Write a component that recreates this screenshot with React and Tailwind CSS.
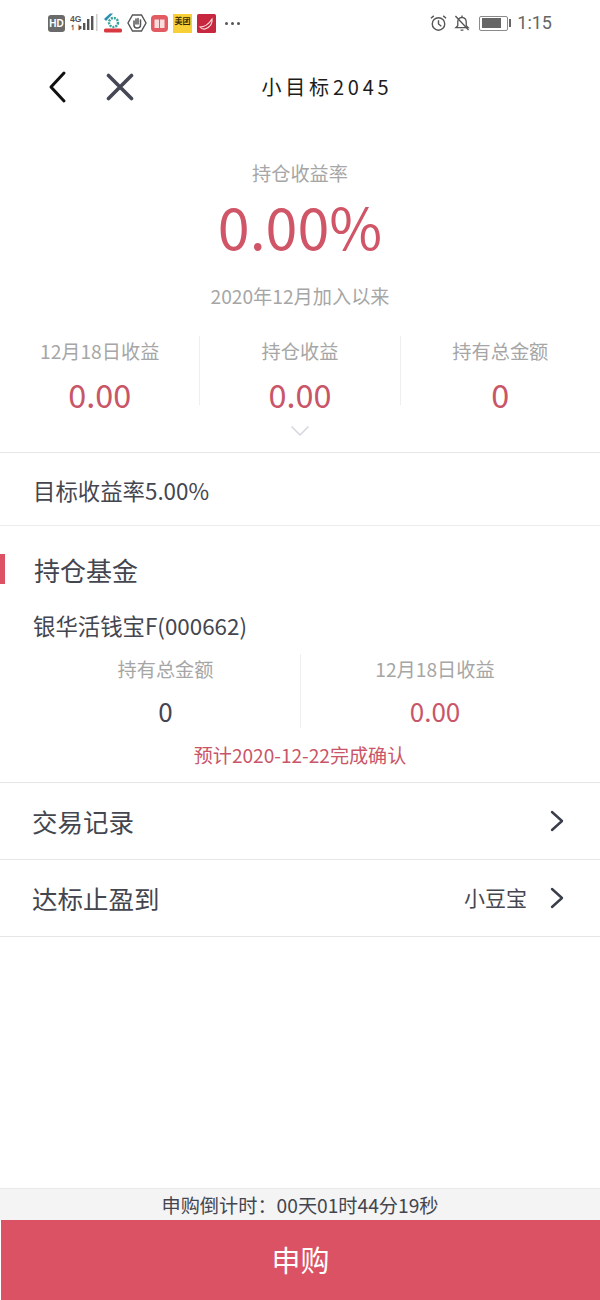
import React from 'react';

const Chevron = () => (
    <svg width="16" height="24" viewBox="0 0 16 24" fill="none" stroke="#3a3d4a" strokeWidth="2.4" strokeLinecap="round" strokeLinejoin="round">
        <path d="M3 3 L13 12 L3 21" />
    </svg>
);

function StatusBar() {
    return (
        <div className="h-[46px] flex items-center justify-between pl-[48px] pr-[48px] shrink-0">
            <div className="flex items-center">
                <div className="w-[17px] h-[17px] rounded-[3px] bg-[#6a6a6a] text-white text-[10px] font-bold flex items-center justify-center [font-family:'Liberation_Sans',sans-serif]">HD</div>
                <div className="ml-[5px] w-[29px] h-[18px]">
                    <svg width="29" height="18" viewBox="0 0 29 18" fill="#555">
                        <rect x="9" y="12" width="2.4" height="3" />
                        <rect x="13" y="9" width="2.4" height="7" />
                        <rect x="17" y="5" width="2.4" height="11" />
                        <rect x="21" y="2" width="2.4" height="14" />
                        <rect x="26" y="0" width="1.5" height="17" fill="#ccc" />
                        <text x="0" y="7.5" fontSize="8.5" fontWeight="700" fontFamily="Liberation Sans">4G</text>
                        <text x="0" y="15.5" fontSize="7" fontWeight="700" fontFamily="Liberation Sans">↿⇂</text>
                    </svg>
                </div>
                <svg className="ml-[4px]" width="20" height="20" viewBox="0 0 20 20" fill="none">
                    <path d="M1 6 L7 0.5 L10 0.5 L3 8 Z" fill="#2b8fb0" />
                    <circle cx="10.5" cy="9.5" r="4.5" fill="none" stroke="#3aa39a" strokeWidth="2.4" strokeDasharray="2 1" />
                    <rect x="1" y="15.5" width="18" height="4" rx="1.5" fill="#d8383f" />
                </svg>
                <svg className="ml-[4px]" width="20" height="20" viewBox="0 0 20 20" fill="none">
                    <path d="M5.5 2 H14.5 L19 10 L14.5 18 H5.5 L1 10 Z" stroke="#555" strokeWidth="1.4" />
                    <path d="M7 8 V12 Q7 15 10 15 Q13.5 15 13.5 12 V7 M9 11 V6 M11 11 V5.5 M13.5 10 V7" stroke="#555" strokeWidth="1.5" strokeLinecap="round" />
                </svg>
                <svg className="ml-[4px]" width="17" height="17" viewBox="0 0 17 17">
                    <rect width="17" height="17" rx="4" fill="#e25a62" />
                    <path d="M3.5 4.5 H8 V13 H3.5 Z M9 4.5 H13.5 V13 H9 Z" fill="#fbdcdc" />
                </svg>
                <div className="ml-[5px] w-[19px] h-[19px] bg-[#f9cf38] text-[#3a2a00] text-[8px] leading-[14px] text-center font-bold [font-family:'Noto_Sans_CJK_SC',sans-serif]">美团</div>
                <svg className="ml-[5px]" width="19" height="19" viewBox="0 0 19 19">
                    <rect width="19" height="19" rx="1.5" fill="#c8283f" />
                    <path d="M3 13 Q10 13 15 5 Q16 12 8 15 Q5 15.5 3 13 Z" fill="none" stroke="#fbe4e4" strokeWidth="1.1" />
                </svg>
                <span className="ml-[9px] flex gap-[3px]">
                    <i className="w-[3px] h-[3px] rounded-full bg-[#555]" />
                    <i className="w-[3px] h-[3px] rounded-full bg-[#555]" />
                    <i className="w-[3px] h-[3px] rounded-full bg-[#555]" />
                </span>
            </div>
            <div className="flex items-center">
                <svg width="17" height="18" viewBox="0 0 18 18" fill="none" stroke="#555" strokeWidth="1.5">
                    <circle cx="9" cy="10" r="6.6" />
                    <path d="M9 6 V10 L12 12.5" />
                    <path d="M1 4 L4 1.5 M17 4 L14 1.5" />
                </svg>
                <svg className="ml-[7px]" width="16" height="18" viewBox="0 0 17 18" fill="none" stroke="#555" strokeWidth="1.4">
                    <path d="M4 12 V8 Q4 3.5 8.5 3 Q13 3.5 13 8 V12 L15 14 H2 Z" />
                    <path d="M8.5 1 V3 M7 16.5 H10" />
                    <path d="M1.5 1.5 L15.5 16.5" />
                </svg>
                <div className="ml-[9px] w-[29px] h-[15px] rounded-[2px] border border-[#8a8a8a] p-[1.5px]">
                    <div className="w-[19px] h-full bg-[#666]" />
                </div>
                <div className="ml-[1px] w-[2px] h-[8px] bg-[#666]" />
                <span className="ml-[6px] text-[18px] text-[#666] leading-none [font-family:'Roboto',sans-serif]">1:15</span>
            </div>
        </div>
    );
}

function Stat({ label, value, border }) {
    return (
        <div className={`flex-1 h-[69px] flex flex-col items-center ${border ? 'border-r border-[#eeeeee]' : ''}`}>
            <div className="text-[19.2px] leading-[30px] text-[#a6a6a6]">{label}</div>
            <div className="mt-[9px] text-[32.4px] leading-[38px] text-[#c95668]">{value}</div>
        </div>
    );
}

export default function App() {
    return (
        <div className="w-[600px] h-[1300px] bg-white flex flex-col overflow-hidden opacity-[.999] [font-family:'Noto_Sans_CJK_SC','Noto_Sans',sans-serif]">
            <StatusBar />

            <div className="h-[82px] shrink-0 relative flex items-center justify-center pl-[54px]">
                <svg className="absolute left-[48px] top-[24px]" width="20" height="34" viewBox="0 0 20 34" fill="none" stroke="#111" strokeWidth="3" strokeLinecap="round" strokeLinejoin="round">
                    <path d="M16 3 L3 17 L16 31" />
                </svg>
                <svg className="absolute left-[106px] top-[27px]" width="28" height="28" viewBox="0 0 28 28" fill="none" stroke="#454754" strokeWidth="3.6" strokeLinecap="round">
                    <path d="M2.5 2.5 L25.5 25.5 M25.5 2.5 L2.5 25.5" />
                </svg>
                <span className="text-[20px] tracking-[3.8px] text-[#1c1c1c]">小目标2045</span>
            </div>

            <div className="flex flex-col items-center shrink-0">
                <div className="mt-[30px] h-[30px] text-[19.2px] leading-[30px] text-[#a6a6a6]">持仓收益率</div>
                <div className="mt-[7px] h-[60px] text-[57.4px] leading-[60px] text-[#cf5567]">0.00%</div>
                <div className="mt-[26px] h-[30px] text-[19.2px] leading-[30px] text-[#a6a6a6]">2020年12月加入以来</div>
            </div>

            <div className="mt-[25px] flex shrink-0">
                <Stat label="12月18日收益" value="0.00" border />
                <Stat label="持仓收益" value="0.00" border />
                <Stat label="持有总金额" value="0" />
            </div>

            <div className="h-[48px] border-b border-[#e6e6e6] flex justify-center pt-[20px] shrink-0">
                <svg width="20" height="12" viewBox="0 0 20 12" fill="none" stroke="#d4d6dc" strokeWidth="1.5">
                    <path d="M1.5 1.5 L10 10 L18.5 1.5" />
                </svg>
            </div>

            <div className="h-[73px] border-b border-[#ececec] flex items-center pl-[33px] pt-[3px] text-[22.4px] text-[#44464f] shrink-0">目标收益率5.00%</div>

            <div className="h-[60px] mt-[13px] flex items-center shrink-0">
                <div className="w-[5px] h-[30px] bg-[#dc5264]" />
                <div className="ml-[29px] text-[26px] text-[#44464f]">持仓基金</div>
            </div>

            <div className="mt-[7px] pl-[33px] text-[22.4px] leading-[38px] text-[#44464f] shrink-0">银华活钱宝F(000662)</div>

            <div className="mt-[10px] flex shrink-0">
                <div className="w-[301px] pl-[31px] h-[74px] border-r border-[#eeeeee] flex flex-col items-center">
                    <div className="text-[19.2px] leading-[30px] text-[#a6a6a6]">持有总金额</div>
                    <div className="mt-[11px] text-[26px] leading-[32px] text-[#44464f]">0</div>
                </div>
                <div className="flex-1 h-[74px] flex flex-col items-center pr-[31px]">
                    <div className="text-[19.2px] leading-[30px] text-[#a6a6a6]">12月18日收益</div>
                    <div className="mt-[11px] text-[26px] leading-[32px] text-[#c95668]">0.00</div>
                </div>
            </div>

            <div className="h-[55px] border-b border-[#e6e6e6] text-center text-[19.1px] leading-[54px] text-[#c95668] shrink-0">预计2020-12-22完成确认</div>

            <div className="h-[77px] border-b border-[#e6e6e6] flex items-center justify-between pl-[32px] pr-[35px] shrink-0">
                <span className="text-[25.5px] text-[#44464f]">交易记录</span>
                <Chevron />
            </div>
            <div className="h-[77px] border-b border-[#e6e6e6] flex items-center justify-between pl-[32px] pr-[35px] shrink-0">
                <span className="text-[25.5px] text-[#44464f]">达标止盈到</span>
                <span className="flex items-center gap-[22px]">
                    <span className="text-[21px] text-[#44464f]">小豆宝</span>
                    <Chevron />
                </span>
            </div>

            <div className="flex-1" />

            <div className="h-[32px] bg-[#f4f4f4] border-t border-[#e9e9e9] text-center text-[19.2px] leading-[32px] text-[#44464f] shrink-0">申购倒计时：00天01时44分19秒</div>
            <div className="h-[80px] ml-[1px] bg-[#da5263] text-white flex items-center justify-center text-[29px] shrink-0">申购</div>
        </div>
    );
}
